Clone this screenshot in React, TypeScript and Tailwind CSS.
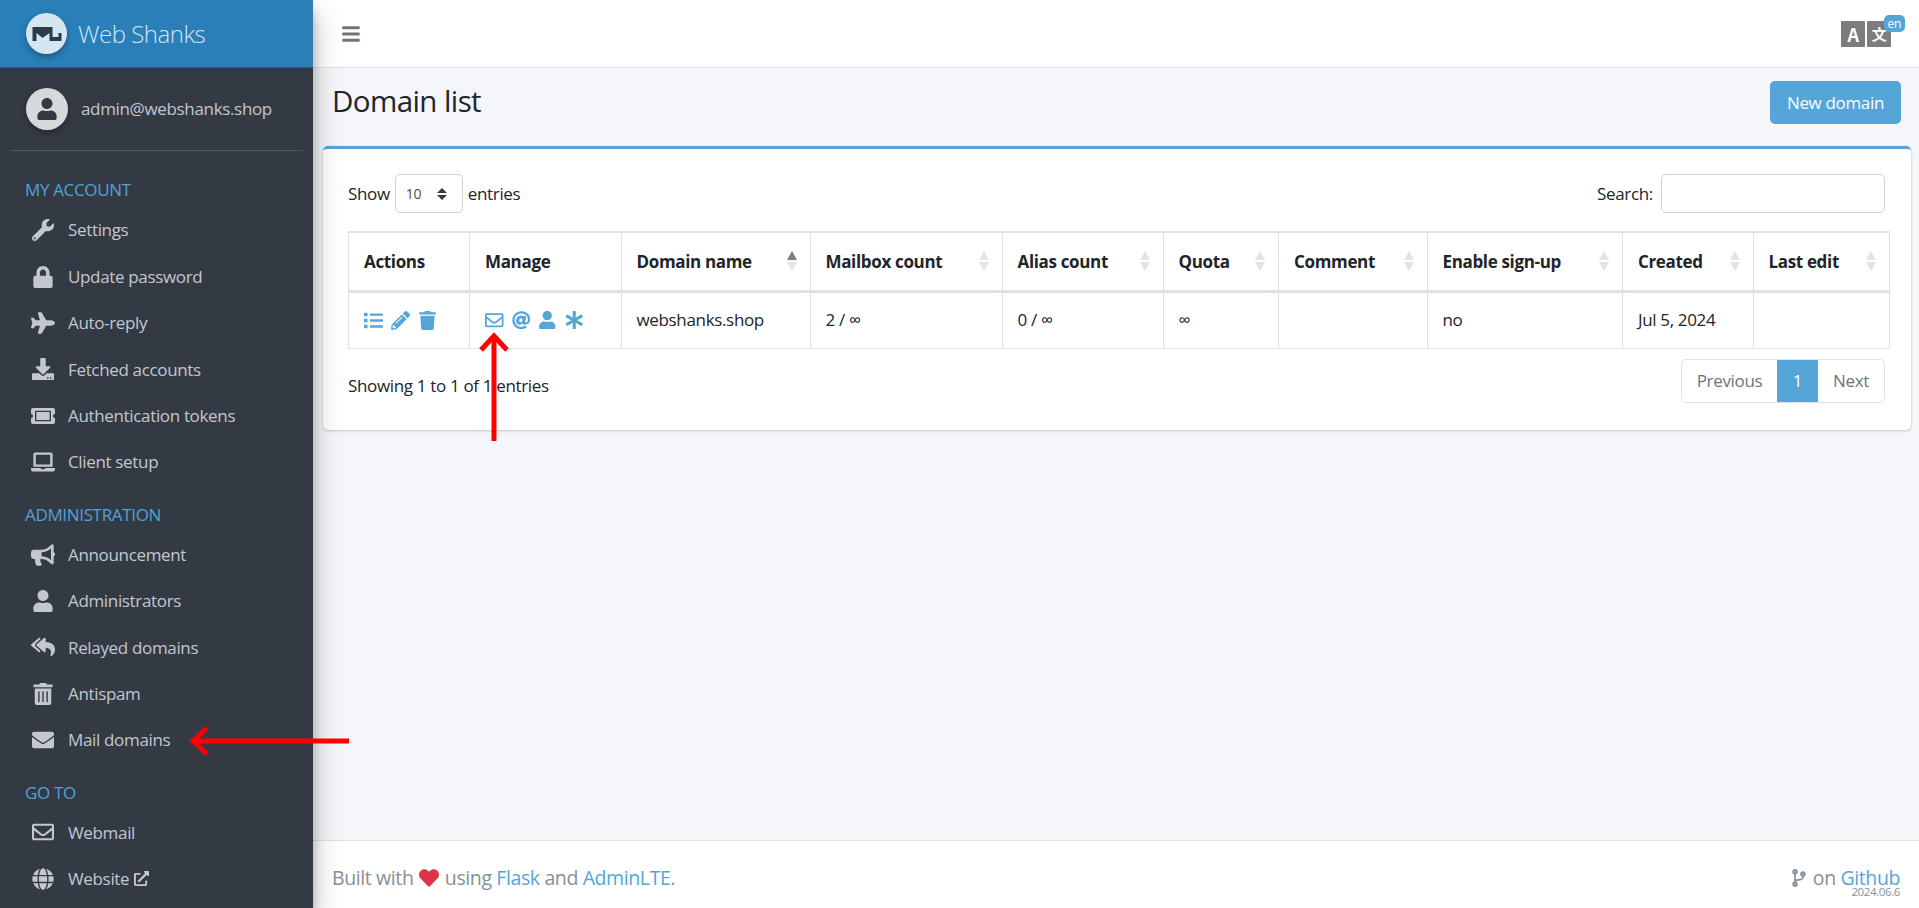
import {
  FaAsterisk,
  FaAt,
  FaBars,
  FaBullhorn,
  FaCodeBranch,
  FaDownload,
  FaEnvelope,
  FaExternalLinkAlt,
  FaGlobe,
  FaHeart,
  FaLaptop,
  FaList,
  FaLock,
  FaPencilAlt,
  FaPlane,
  FaRegEnvelope,
  FaReplyAll,
  FaTicketAlt,
  FaTrash,
  FaTrashAlt,
  FaUser,
  FaWrench,
} from "react-icons/fa";
import type { IconType } from "react-icons";

type NavItem = { label: string; icon: IconType; external?: boolean };

const sections: { title: string; items: NavItem[] }[] = [
  {
    title: "MY ACCOUNT",
    items: [
      { label: "Settings", icon: FaWrench },
      { label: "Update password", icon: FaLock },
      { label: "Auto-reply", icon: FaPlane },
      { label: "Fetched accounts", icon: FaDownload },
      { label: "Authentication tokens", icon: FaTicketAlt },
      { label: "Client setup", icon: FaLaptop },
    ],
  },
  {
    title: "ADMINISTRATION",
    items: [
      { label: "Announcement", icon: FaBullhorn },
      { label: "Administrators", icon: FaUser },
      { label: "Relayed domains", icon: FaReplyAll },
      { label: "Antispam", icon: FaTrashAlt },
      { label: "Mail domains", icon: FaEnvelope },
    ],
  },
  {
    title: "GO TO",
    items: [
      { label: "Webmail", icon: FaRegEnvelope },
      { label: "Website", icon: FaGlobe, external: true },
    ],
  },
];

const columns = [
  { label: "Actions", width: "w-[121px]" },
  { label: "Manage", width: "w-[151.5px]" },
  { label: "Domain name", width: "w-[189px]", sort: "asc" },
  { label: "Mailbox count", width: "w-[192px]", sort: "both" },
  { label: "Alias count", width: "w-[161px]", sort: "both" },
  { label: "Quota", width: "w-[115.5px]", sort: "both" },
  { label: "Comment", width: "w-[148.5px]", sort: "both" },
  { label: "Enable sign-up", width: "w-[195.5px]", sort: "both" },
  { label: "Created", width: "w-[130.5px]", sort: "both" },
  { label: "Last edit", width: "w-[136px]", sort: "both" },
];

function SortArrows({ mode }: { mode: string }) {
  return (
    <span className="absolute right-[13px] top-1/2 -translate-y-1/2 flex flex-col gap-[2px]">
      <span
        className={`w-0 h-0 border-x-[5px] border-x-transparent border-b-[9px] ${
          mode === "asc" ? "border-b-[#7a7f85]" : "border-b-[#e2e3e4]"
        }`}
      />
      <span className="w-0 h-0 border-x-[5px] border-x-transparent border-t-[9px] border-t-[#e2e3e4]" />
    </span>
  );
}

export default function App() {
  return (
    <div className="relative flex h-[908px] overflow-hidden bg-[#f4f6f9] text-[17px] tracking-[-0.02em] text-[#212529] font-['Open_Sans',sans-serif]">
      <aside className="relative z-10 w-[313px] shrink-0 flex flex-col bg-[#343a44] shadow-[0_14px_28px_rgba(0,0,0,0.25),0_10px_10px_rgba(0,0,0,0.22)]">
        <div className="h-[68px] shrink-0 flex items-center gap-[11px] pl-[26px] bg-[#2a7fb8] border-b border-[#4b545c]">
          <span className="w-[41px] h-[41px] rounded-full bg-[#d5e5f1] shadow-[0_3px_6px_rgba(0,0,0,0.3)] flex items-center justify-center">
            <svg viewBox="0 0 29 14" className="w-[30px] h-[14px]" fill="#2b3b4b">
              <path d="M0 0H20V10H26V6H29V14H17V6L10 11L4 6V14H0Z" />
            </svg>
          </span>
          <span className="text-[24px] tracking-[-0.02em] text-[#d5e5f1] font-light">Web Shanks</span>
        </div>

        <div className="mx-[10px] h-[83px] shrink-0 flex items-center gap-[13px] pl-[16px] border-b border-[#4f5962]">
          <span className="w-[42px] h-[42px] rounded-full bg-[#d6d8dc] shadow-[0_3px_6px_rgba(0,0,0,0.3)] flex items-center justify-center">
            <FaUser className="text-[22px] text-[#343a44]" />
          </span>
          <span className="text-[#c2c7d0]">admin@webshanks.shop</span>
        </div>

        <nav className="flex-1 pt-[22px]">
          {sections.map((section) => (
            <div key={section.title} className="mb-[12px]">
              <div className="h-[34px] flex items-center pl-[25px] text-[#4ea3d8]">
                {section.title}
              </div>
              {section.items.map((item) => (
                <div
                  key={item.label}
                  className="h-[46.4px] flex items-center pl-[31px] text-[#c2c7d0]"
                >
                  <item.icon className="w-[24px] h-[22px] mr-[13px] shrink-0" />
                  {item.label}
                  {item.external && (
                    <FaExternalLinkAlt className="ml-[5px] text-[15px]" />
                  )}
                </div>
              ))}
            </div>
          ))}
        </nav>
      </aside>

      <main className="flex-1 min-w-0 flex flex-col">
        <header className="h-[68px] shrink-0 bg-white border-b border-[#dee2e6] flex items-center justify-between pl-[28px] pr-[28px]">
          <FaBars className="text-[20px] text-[#6c757d]" />
          <span className="relative flex gap-[2px] font-['Noto_Sans_CJK_SC',sans-serif]">
            <span className="w-[24px] h-[26px] rounded-[1px] bg-[#7d7d7d] text-white font-bold text-[18px] leading-[26px] text-center">
              A
            </span>
            <span className="w-[24px] h-[26px] rounded-[1px] bg-[#7d7d7d] text-white font-bold text-[15px] leading-[26px] text-center">
              文
            </span>
            <span className="absolute -top-[6px] -right-[14px] h-[17px] px-[4px] rounded-[5px] bg-[#55a5d9] text-white text-[12px] leading-[17px] font-['Open_Sans',sans-serif]">
              en
            </span>
          </span>
        </header>

        <section className="flex-1 min-h-0">
          <div className="flex items-start justify-between h-[78px] pt-[13px] pl-[19px] pr-[18px]">
            <h1 className="text-[29.5px] leading-[40px] tracking-[-0.02em]">Domain list</h1>
            <button className="w-[131px] h-[43px] rounded-[5px] bg-[#55a5d9] text-white">
              New domain
            </button>
          </div>

          <div className="ml-[10px] mr-[8px] h-[284px] bg-white rounded-[5px] border-t-[3px] border-[#55a5d9] shadow-[0_0_1px_rgba(0,0,0,0.125),0_1px_3px_rgba(0,0,0,0.2)] pt-[25px] pl-[25px] pr-[26px]">
            <div className="flex items-center justify-between">
              <div className="flex items-center gap-[5px]">
                Show
                <span className="w-[68px] h-[39px] rounded-[5px] border border-[#ced4da] flex items-center justify-between pl-[10px] pr-[15px] text-[14px] text-[#495057]">
                  10
                  <span className="flex flex-col gap-[2px]">
                    <span className="w-0 h-0 border-x-[5px] border-x-transparent border-b-[5px] border-b-[#343a40]" />
                    <span className="w-0 h-0 border-x-[5px] border-x-transparent border-t-[5px] border-t-[#343a40]" />
                  </span>
                </span>
                entries
              </div>
              <div className="flex items-center gap-[8px]">
                Search:
                <span className="block w-[224px] h-[39px] rounded-[5px] border border-[#ced4da] bg-white" />
              </div>
            </div>

            <table className="mt-[18px] table-fixed border-collapse w-[1541px] max-w-none">
              <thead>
                <tr className="h-[59px] border-t-[2px] border-[#dee2e6]">
                  {columns.map((col) => (
                    <th
                      key={col.label}
                      className={`${col.width} relative border-x border-b-[3px] border-[#dee2e6] pl-[15px] text-left font-bold`}
                    >
                      {col.label}
                      {col.sort && <SortArrows mode={col.sort} />}
                    </th>
                  ))}
                </tr>
              </thead>
              <tbody>
                <tr className="h-[57px]">
                  <td className="border border-[#dee2e6] pl-[15px]">
                    <span className="flex items-center gap-[8px] text-[19px] text-[#55a5d9]">
                      <FaList />
                      <FaPencilAlt />
                      <FaTrash />
                    </span>
                  </td>
                  <td className="border border-[#dee2e6] pl-[15px]">
                    <span className="flex items-center gap-[8px] text-[18.5px] text-[#55a5d9]">
                      <FaRegEnvelope />
                      <FaAt />
                      <FaUser />
                      <FaAsterisk />
                    </span>
                  </td>
                  <td className="border border-[#dee2e6] pl-[15px]">webshanks.shop</td>
                  <td className="border border-[#dee2e6] pl-[15px]">2 / ∞</td>
                  <td className="border border-[#dee2e6] pl-[15px]">0 / ∞</td>
                  <td className="border border-[#dee2e6] pl-[15px]">∞</td>
                  <td className="border border-[#dee2e6] pl-[15px]"></td>
                  <td className="border border-[#dee2e6] pl-[15px]">no</td>
                  <td className="border border-[#dee2e6] pl-[15px]">Jul 5, 2024</td>
                  <td className="border border-[#dee2e6] pl-[15px]"></td>
                </tr>
              </tbody>
            </table>

            <div className="mt-[10px] flex items-start justify-between">
              <span className="pt-[15px] leading-[23px]">Showing 1 to 1 of 1 entries</span>
              <div className="flex h-[44px] rounded-[5px] overflow-hidden border border-[#dee2e6] text-[#6c757d]">
                <span className="w-[95px] flex items-center justify-center">Previous</span>
                <span className="w-[41px] flex items-center justify-center bg-[#55a5d9] text-white">1</span>
                <span className="w-[66px] flex items-center justify-center">Next</span>
              </div>
            </div>
          </div>
        </section>

        <footer className="h-[68px] shrink-0 bg-white border-t border-[#dee2e6] flex items-center justify-between pt-[7px] pl-[19px] pr-[19px] text-[19.5px] tracking-[-0.02em] text-[#869099]">
          <span>
            Built with <FaHeart className="inline mx-[1px] text-[#dc3545] text-[20px] align-[-3px]" /> using{" "}
            <span className="text-[#55a5d9]">Flask</span> and{" "}
            <span className="text-[#55a5d9]">AdminLTE</span>.
          </span>
          <span className="relative">
            <FaCodeBranch className="inline text-[18px] align-[-2px]" /> on <span className="text-[#55a5d9]">Github</span>
            <span className="absolute right-0 top-[23px] text-[11.5px] leading-none">2024.06.6</span>
          </span>
        </footer>
      </main>

      {/* annotation arrows drawn over the screenshot */}
      <svg className="absolute z-20 left-[189px] top-[726px] w-[162px] h-[30px]" viewBox="0 0 162 30" fill="none" stroke="#ff0000" strokeWidth="5">
        <path d="M160 15H4" />
        <path d="M18 2L4 15L18 28" />
      </svg>
      <svg className="absolute z-20 left-[479px] top-[332px] w-[30px] h-[110px]" viewBox="0 0 30 110" fill="none" stroke="#ff0000" strokeWidth="5">
        <path d="M15 109V4" />
        <path d="M2 18L15 4L28 18" />
      </svg>
    </div>
  );
}
